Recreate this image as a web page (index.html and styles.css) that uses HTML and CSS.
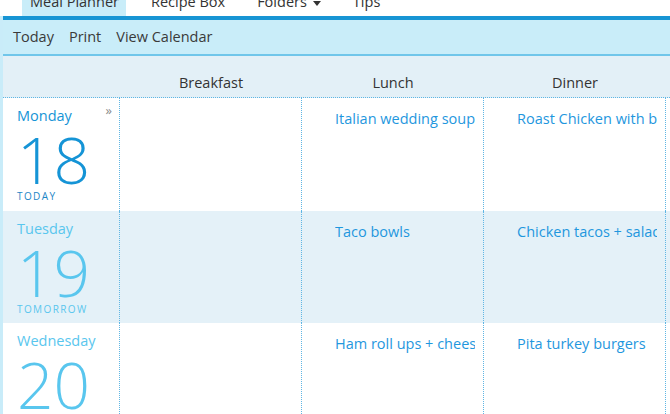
FILE: index.html
```html
<!DOCTYPE html>
<html>
<head>
<meta charset="utf-8">
<link rel="stylesheet" href="styles.css">
</head>
<body>
<div class="page">
  <nav class="topnav">
    <a class="nav-item active">Meal Planner</a>
    <a class="nav-item">Recipe Box</a>
    <a class="nav-item">Folders<span class="caret"></span></a>
    <a class="nav-item">Tips</a>
  </nav>
  <div class="main">
    <div class="toolbar">
      <a class="tool">Today</a>
      <a class="tool">Print</a>
      <a class="tool">View Calendar</a>
    </div>
    <div class="planner">
      <div class="row head-row">
        <div class="hcell"></div>
        <div class="hcell">Breakfast</div>
        <div class="hcell">Lunch</div>
        <div class="hcell">Dinner</div>
        <div class="hcell"></div>
      </div>
      <div class="row day-row first">
        <div class="day today">
          <div class="day-name">Monday</div>
          <div class="day-num">18</div>
          <div class="day-tag">TODAY</div>
          <span class="more">»</span>
        </div>
        <div class="meal"></div>
        <div class="meal"><a class="dish">Italian wedding soup</a></div>
        <div class="meal"><a class="dish">Roast Chicken with broccoli</a></div>
        <div class="meal end"></div>
      </div>
      <div class="row day-row alt">
        <div class="day">
          <div class="day-name">Tuesday</div>
          <div class="day-num">19</div>
          <div class="day-tag">TOMORROW</div>
        </div>
        <div class="meal"></div>
        <div class="meal"><a class="dish">Taco bowls</a></div>
        <div class="meal"><a class="dish">Chicken tacos + salad</a></div>
        <div class="meal end"></div>
      </div>
      <div class="row day-row">
        <div class="day">
          <div class="day-name">Wednesday</div>
          <div class="day-num">20</div>
          <div class="day-tag"></div>
        </div>
        <div class="meal"></div>
        <div class="meal"><a class="dish">Ham roll ups + cheese</a></div>
        <div class="meal"><a class="dish">Pita turkey burgers</a></div>
        <div class="meal end"></div>
      </div>
    </div>
  </div>
</div>
</body>
</html>
```
FILE: styles.css
```css
html, body {
  margin: 0;
  padding: 0;
  height: 414px;
  overflow: hidden;
  background: #ffffff;
}
body {
  font-family: "Open Sans", "Liberation Sans", sans-serif;
  color: #333333;
}
.page {
  width: 670px;
  height: 414px;
  overflow: hidden;
}
.topnav {
  display: flex;
  height: 27px;
  margin-top: -11px;
  padding-left: 22px;
  gap: 17px;
  background: #ffffff;
}
.nav-item {
  display: flex;
  align-items: flex-start;
  padding: 0 7px 0 8px;
  font-size: 14.5px;
  line-height: 26px;
  color: #333333;
}
.nav-item.active {
  background: #c9edf9;
}
.caret {
  display: inline-block;
  width: 0;
  height: 0;
  margin: 12px 0 0 6px;
  border-left: 4px solid transparent;
  border-right: 4px solid transparent;
  border-top: 5px solid #333333;
}
.main {
  border-left: 3px solid #c9ecf9;
  height: 398px;
}
.toolbar {
  display: flex;
  gap: 15px;
  height: 40px;
  padding: 7px 0 0 10px;
  box-sizing: border-box;
  background: #c9edf9;
  border-top: 4px solid #1795d4;
  border-bottom: 2px solid #70c6ea;
}
.tool {
  font-size: 14.5px;
  line-height: 20px;
  color: #3a3a3a;
}
.row {
  display: grid;
  grid-template-columns: 117px 182px 182px 182px 1fr;
}
.head-row {
  height: 42px;
  box-sizing: border-box;
  background: #e3f0f7;
  border-bottom: 1px dotted #5fb6e4;
}
.hcell {
  text-align: center;
  padding-top: 17px;
  font-size: 14.5px;
  line-height: 20px;
  color: #333333;
}
.day-row {
  height: 113px;
  background: #ffffff;
}
.day-row.alt {
  height: 112px;
  background: #e4f1f8;
}
.day {
  position: relative;
  padding: 8px 0 0 14px;
  border-right: 1px dotted #5fb6e4;
  color: #59c6ee;
}
.day.today {
  color: #1594d6;
}
.day-name {
  font-size: 14.5px;
  line-height: 20px;
}
.day-num {
  margin-top: 2px;
  font-size: 64px;
  line-height: 64px;
  font-weight: 350;
}
.day-tag {
  margin-top: -2px;
  font-size: 10px;
  line-height: 12px;
  letter-spacing: 1.4px;
}
.day.today .day-tag {
  color: #1c86c6;
}
.more {
  position: absolute;
  top: 6px;
  right: 7px;
  font-size: 13px;
  line-height: 13px;
  color: #8a8a8a;
}
.meal {
  padding: 11px 8px 0 33px;
  border-right: 1px dotted #5fb6e4;
  overflow: hidden;
  white-space: nowrap;
}
.meal.end {
  border-right: none;
  padding: 0;
}
.dish {
  display: block;
  overflow: hidden;
  font-size: 14.5px;
  line-height: 19px;
  color: #1f97de;
}
```
